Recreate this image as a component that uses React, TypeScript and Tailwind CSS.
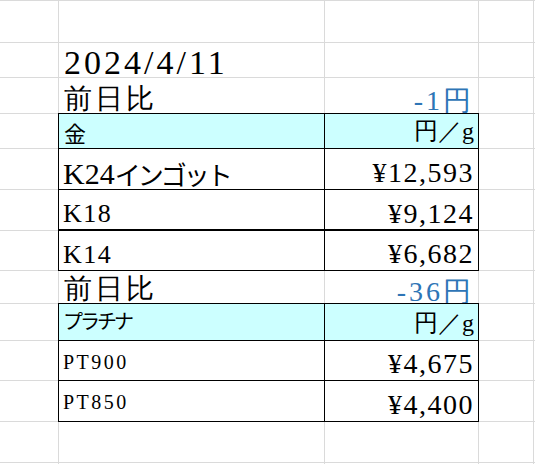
import React from 'react';

const jp = "font-['Noto_Sans_CJK_JP',sans-serif]";

type CellDef = {
  text?: React.ReactNode;
  cls?: string;
  table?: boolean;
  head?: boolean;
  thickTop?: boolean;
  blue?: boolean;
};

type RowDef = { b?: CellDef; c?: CellDef };

function Cell({ def }: { def?: CellDef }) {
  const d = def || {};
  return (
    <div
      className={`flex items-end whitespace-nowrap ${d.blue ? 'text-[#2e75b6]' : 'text-black'} ${
        d.head ? 'bg-[#ccffff]' : 'bg-white'
      } ${d.table ? 'outline outline-black' : ''} ${d.thickTop ? 'shadow-[0_-2px_0_0_#000]' : ''} ${d.cls || ''}`}
    >
      {d.text}
    </div>
  );
}

const label = 'pl-[4px]';
const value = 'justify-end pr-[4px] text-[28px] tracking-[1.5px] leading-[33px]';
const diff = 'justify-end pr-[4px] text-[28px] tracking-[3px]';
const unit = 'justify-end pr-[4px] text-[24px] leading-[33px]';
const prevDay = 'pl-[5px] text-[28px] tracking-[3px] leading-none';

const rows: RowDef[] = [
  {},
  { b: { text: '2024/4/11', cls: 'pl-[5px] text-[34px] tracking-[3px] leading-[29px]' } },
  {
    b: { text: '前日比', cls: prevDay },
    c: { text: '-1円', blue: true, cls: `${diff} leading-[24px]` },
  },
  {
    b: { text: '金', head: true, table: true, cls: `${jp} pl-[5px] pb-[5px] text-[22px] leading-none` },
    c: { text: '円／g', head: true, table: true, cls: unit },
  },
  {
    b: {
      table: true,
      cls: `${label} text-[30px] leading-[30px]`,
      text: (
        <>
          K24
          <span className={`${jp} text-[26px] tracking-[-3px]`}>インゴット</span>
        </>
      ),
    },
    c: { text: '¥12,593', table: true, cls: value },
  },
  {
    b: { text: 'K18', table: true, cls: `${label} text-[26px] tracking-[1.5px] leading-[33px]` },
    c: { text: '¥9,124', table: true, cls: value },
  },
  {
    b: { text: 'K14', table: true, thickTop: true, cls: `${label} text-[26px] tracking-[1.5px] leading-[30px]` },
    c: { text: '¥6,682', table: true, thickTop: true, cls: `${value} leading-[31px]` },
  },
  {
    b: { text: '前日比', cls: prevDay },
    c: { text: '-36円', blue: true, cls: `${diff} leading-[22px]` },
  },
  {
    b: { text: 'プラチナ', head: true, table: true, cls: `${jp} pl-[4px] pb-[9px] text-[20px] tracking-[-3px] leading-none` },
    c: { text: '円／g', head: true, table: true, cls: unit },
  },
  {
    b: { text: 'PT900', table: true, cls: `${label} text-[20px] tracking-[2.5px] leading-[35px]` },
    c: { text: '¥4,675', table: true, cls: value },
  },
  {
    b: { text: 'PT850', table: true, cls: `${label} text-[20px] tracking-[2.5px] leading-[37px]` },
    c: { text: '¥4,400', table: true, cls: value },
  },
  {},
  {},
];

export default function App() {
  return (
    <div className="h-[464px] w-[535px] overflow-hidden bg-white font-['Liberation_Serif',serif]">
      <div className="grid grid-cols-[58px_265px_153px_54px_1fr] grid-rows-[41px_34px_35px_34px_40px_40px_39px_32px_36px_39px_40px_40px_1px] gap-px bg-[#dadada] pt-px">
        {rows.map((r, i) => (
          <React.Fragment key={i}>
            <Cell />
            <Cell def={r.b} />
            <Cell def={r.c} />
            <Cell />
            <Cell />
          </React.Fragment>
        ))}
      </div>
    </div>
  );
}
